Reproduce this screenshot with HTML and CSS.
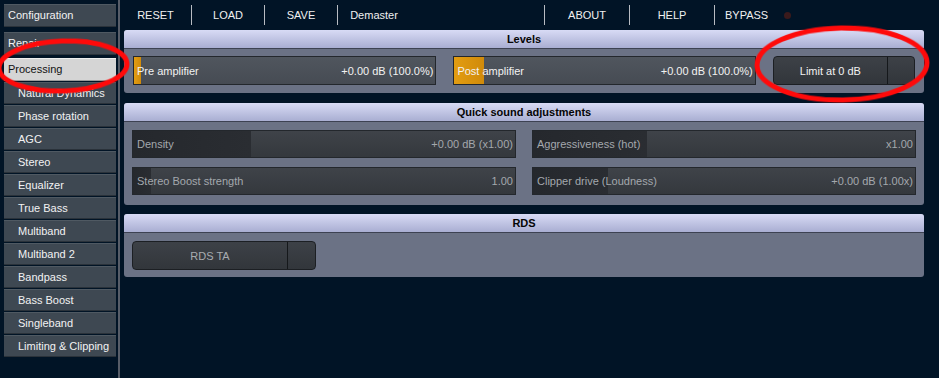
FILE: index.html
```html
<!DOCTYPE html>
<html lang="en">

<head>
    <meta charset="UTF-8">
    <meta name="viewport" content="width=device-width, initial-scale=1.0">
    <title>Processing</title>

    <link rel="stylesheet" href="styles.css">
</head>

<body>
    <div class="app">
        <div class="sidebar">
            <div class="navbtn top first">Configuration</div>
            <div class="navbtn top second">Repair</div>
            <div class="navbtn top active">Processing</div>
            <div class="navbtn sub">Natural Dynamics</div>
            <div class="navbtn sub">Phase rotation</div>
            <div class="navbtn sub">AGC</div>
            <div class="navbtn sub">Stereo</div>
            <div class="navbtn sub">Equalizer</div>
            <div class="navbtn sub">True Bass</div>
            <div class="navbtn sub">Multiband</div>
            <div class="navbtn sub">Multiband 2</div>
            <div class="navbtn sub">Bandpass</div>
            <div class="navbtn sub">Bass Boost</div>
            <div class="navbtn sub">Singleband</div>
            <div class="navbtn sub">Limiting &amp; Clipping</div>
        </div>

        <div class="main">
            <div class="topbar">
                <div class="tb-item first">RESET</div>
                <div class="tb-item">LOAD</div>
                <div class="tb-item">SAVE</div>
                <div class="tb-item">Demaster</div>
                <div class="tb-spacer"></div>
                <div class="tb-item wide">ABOUT</div>
                <div class="tb-item wide">HELP</div>
                <div class="tb-item bypass">BYPASS</div>
                <div class="led"></div>
            </div>

            <div class="panel levels">
                <div class="panel-head">Levels</div>
                <div class="panel-body">
                    <div class="slider lvl pre" style="--fill: 7px">
                        <span>Pre amplifier</span>
                        <span>+0.00 dB (100.0%)</span>
                    </div>
                    <div class="slider lvl post" style="--fill: 30px">
                        <span>Post amplifier</span>
                        <span>+0.00 dB (100.0%)</span>
                    </div>
                    <div class="toggle limit">
                        <span class="toggle-label">Limit at 0 dB</span>
                        <span class="toggle-end"></span>
                    </div>
                </div>
            </div>

            <div class="panel quick">
                <div class="panel-head">Quick sound adjustments</div>
                <div class="panel-body grid">
                    <div class="slider qs" style="--fill: 118px">
                        <span>Density</span>
                        <span>+0.00 dB (x1.00)</span>
                    </div>
                    <div class="slider qs" style="--fill: 114px">
                        <span>Aggressiveness (hot)</span>
                        <span>x1.00</span>
                    </div>
                    <div class="slider qs" style="--fill: 18px">
                        <span>Stereo Boost strength</span>
                        <span>1.00</span>
                    </div>
                    <div class="slider qs" style="--fill: 75px">
                        <span>Clipper drive (Loudness)</span>
                        <span>+0.00 dB (1.00x)</span>
                    </div>
                </div>
            </div>

            <div class="panel rds">
                <div class="panel-head">RDS</div>
                <div class="panel-body">
                    <div class="toggle rdsta">
                        <span class="toggle-label">RDS TA</span>
                        <span class="toggle-end"></span>
                    </div>
                </div>
            </div>
        </div>
    </div>

    <!-- red marker rings drawn over the screenshot -->
    <svg class="marks" width="939" height="378" viewBox="0 0 939 378">
        <ellipse cx="63" cy="66" rx="64" ry="25" transform="rotate(-2 63 66)"></ellipse>
        <ellipse cx="842" cy="64" rx="85" ry="36" transform="rotate(-1 842 64)"></ellipse>
    </svg>
</body>

</html>
```

FILE: styles.css
```css
html, body {
    margin: 0;
    padding: 0;
    background-color: #011426;
    font-family: 'Liberation Sans', Arial, sans-serif;
    font-size: 11px;
    overflow: hidden;
}

.app {
    display: flex;
    width: 939px;
    height: 378px;
}

/* left navigation */

.sidebar {
    width: 112px;
    padding: 4px 2px 0 4px;
    border-right: 2px solid #575d68;
    display: flex;
    flex-direction: column;
}

.navbtn {
    height: 20px;
    line-height: 20px;
    background-color: #3e4852;
    border-top: 1px solid #4f5962;
    border-bottom: 1px solid #2a323a;
    color: #f2f2f2;
    padding-left: 14px;
    margin-top: 1px;
    white-space: nowrap;
    box-sizing: content-box;
}

.navbtn.top {
    height: 21px;
    line-height: 21px;
    padding-left: 4px;
}

.navbtn.first {
    margin-top: 0;
}

.navbtn.second {
    margin-top: 5px;
}

.navbtn.active {
    background-color: #d5d5d5;
    border-top-color: #eeeeee;
    border-bottom-color: #9a9a9a;
    color: #111111;
    margin-top: 3px;
}

/* main area */

.main {
    flex: 1;
    padding-left: 4px;
}

.topbar {
    height: 30px;
    display: flex;
    align-items: center;
    margin-left: -4px;
    color: #f0f0f0;
}

.tb-item {
    width: 72px;
    height: 20px;
    line-height: 20px;
    text-align: center;
    border-left: 1px solid #b8bcc2;
}

.tb-item.first {
    width: 71px;
    border-left: none;
}

.tb-spacer {
    width: 134px;
}

.tb-item.wide {
    width: 84px;
}

.tb-item.bypass {
    width: 61px;
    text-align: left;
    padding-left: 10px;
    box-sizing: border-box;
}

.led {
    width: 7px;
    height: 7px;
    border-radius: 50%;
    background-color: #3a1a1c;
    margin-left: 9px;
}

/* panels */

.panel {
    width: 800px;
    background-color: #6b7285;
    border-radius: 3px;
    margin-bottom: 10px;
    overflow: hidden;
}

.panel.quick {
    margin-bottom: 9px;
}

.panel-head {
    height: 18px;
    line-height: 18px;
    text-align: center;
    font-weight: bold;
    color: #050505;
    background: linear-gradient(#d8dbf5, #a9aed2);
    border-bottom: 1px solid #3d4252;
}

.panel-body {
    display: flex;
    gap: 17px;
    padding: 7px 9px 8px 9px;
}

.panel-body.grid {
    display: grid;
    grid-template-columns: 384px 384px;
    column-gap: 16px;
    row-gap: 9px;
    padding: 8px 8px 10px 8px;
}

.slider {
    height: 27px;
    border: 1px solid #23272c;
    display: flex;
    align-items: center;
    justify-content: space-between;
    white-space: nowrap;
}

.slider.lvl {
    color: #f2f2f2;
    padding: 0 2px 0 3px;
    background:
        linear-gradient(to right, #e39d12 0, #d08a0a var(--fill), transparent var(--fill)),
        linear-gradient(#50565e, #464b53);
}

.slider.pre {
    width: 298px;
}

.slider.post {
    width: 297px;
}

.slider.qs {
    height: 26px;
    color: #a4a8ad;
    padding: 0 2px 0 4px;
    background:
        linear-gradient(to right, #25282d 0, #2a2d32 var(--fill), transparent var(--fill)),
        linear-gradient(#3f4349, #34383d);
}

.toggle {
    height: 27px;
    border: 1px solid #1c1f23;
    border-radius: 4px;
    background: linear-gradient(#3d4147, #32363b);
    display: flex;
    align-items: stretch;
}

.toggle-label {
    flex: 1;
    display: flex;
    align-items: center;
    justify-content: center;
    border-right: 1px solid #15181b;
}

.toggle-end {
    width: 26px;
}

.toggle.limit {
    width: 141px;
    color: #f2f2f2;
}

.toggle.rdsta {
    width: 182px;
    color: #a8acb0;
}

.toggle.rdsta .toggle-end {
    width: 27px;
}

.panel.rds .panel-body {
    padding: 8px 8px 7px 8px;
}

/* annotation rings */

.marks {
    position: absolute;
    left: 0;
    top: 0;
    pointer-events: none;
}

.marks ellipse {
    fill: none;
    stroke: #ff0a0a;
    stroke-width: 5;
    filter: blur(0.6px);
}
```
